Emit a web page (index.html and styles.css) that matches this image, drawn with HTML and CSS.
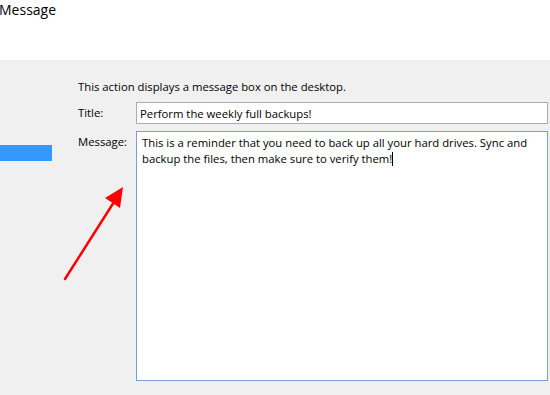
FILE: index.html
```html
<!DOCTYPE html>
<html lang="en">
<head>
  <meta charset="UTF-8">
  <title>Message</title>
  <link rel="stylesheet" href="styles.css">
</head>
<body>
  <div class="header">
    <h1>Message</h1>
  </div>
  <div class="panel">
    <div class="sidebar">
      <div class="nav-item selected"></div>
    </div>
    <div class="content">
      <p class="desc">This action displays a message box on the desktop.</p>
      <div class="row">
        <label for="title">Title:</label>
        <input type="text" id="title" value="Perform the weekly full backups!" />
      </div>
      <div class="row">
        <label for="message">Message:</label>
        <div class="textarea" id="message">This is a reminder that you need to back up all your hard drives. Sync and backup the files, then make sure to verify them!<span class="caret"></span></div>
      </div>
    </div>
    <svg class="arrow" width="80" height="110" viewBox="0 0 80 110">
      <line x1="5" y1="96" x2="54" y2="19" stroke="#f00" stroke-width="2.5" stroke-linecap="round" />
      <polygon points="63,4 45,15 60,25" fill="#f00" />
    </svg>
  </div>
</body>
</html>
```

FILE: styles.css
```css
body {
  margin: 0;
  font-family: "Open Sans", "Noto Sans", sans-serif;
  font-size: 11.3px;
  color: #000;
  background: #f0f0f0;
  overflow: hidden;
}
.header {
  background: white;
  height: 60px;
}
.header h1 {
  margin: 0;
  padding-top: 1px;
  margin-left: -1px;
  font-size: 14px;
  font-weight: normal;
  line-height: 18px;
}
.panel {
  position: relative;
  display: flex;
  height: 335px;
}
.sidebar {
  width: 78px;
  flex-shrink: 0;
}
.nav-item.selected {
  margin-top: 85px;
  width: 52px;
  height: 16px;
  background: #3399ff;
}
.content {
  flex: 1;
  padding-top: 19px;
  padding-right: 2px;
}
.desc {
  margin: 0 0 7px;
  line-height: 16px;
}
.row {
  display: grid;
  grid-template-columns: 58px 1fr;
  margin-bottom: 7px;
}
label {
  padding-top: 3px;
  line-height: 16px;
}
input {
  height: 22px;
  box-sizing: border-box;
  margin: 0;
  padding: 0 3px;
  border: 1px solid #abadb3;
  font: inherit;
  background: white;
}
.textarea {
  height: 250px;
  box-sizing: border-box;
  padding: 3px 5px;
  border: 1px solid #7a9ed6;
  background: white;
  line-height: 16px;
}
.caret {
  display: inline-block;
  width: 1px;
  height: 14px;
  background: #000;
  vertical-align: -3px;
}
.arrow {
  position: absolute;
  left: 60px;
  top: 123px;
}
```
